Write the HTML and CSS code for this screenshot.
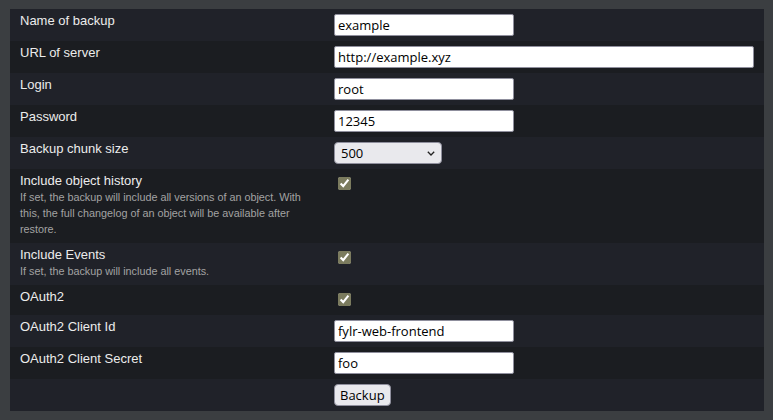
FILE: index.html
```html
<!DOCTYPE html>
<html>
<head>
<meta charset="utf-8">
<link rel="stylesheet" href="styles.css">
</head>
<body>
<div class="wrap">
<table class="form">
  <colgroup><col class="c-label"><col class="c-field"></colgroup>
  <tr>
    <td class="lbl">Name of backup</td>
    <td class="fld"><input class="txt" type="text" value="example"></td>
  </tr>
  <tr>
    <td class="lbl">URL of server</td>
    <td class="fld"><input class="txt wide" type="text" value="http://example.xyz"></td>
  </tr>
  <tr>
    <td class="lbl">Login</td>
    <td class="fld"><input class="txt" type="text" value="root"></td>
  </tr>
  <tr>
    <td class="lbl">Password</td>
    <td class="fld"><input class="txt" type="text" value="12345"></td>
  </tr>
  <tr>
    <td class="lbl">Backup chunk size</td>
    <td class="fld">
      <div class="sel-wrap">
        <select class="sel"><option>500</option></select>
        <svg class="sel-arrow" width="8" height="5" viewBox="0 0 8 5"><path d="M0.8 0.8 L4 4 L7.2 0.8" fill="none" stroke="#222" stroke-width="1.3"/></svg>
      </div>
    </td>
  </tr>
  <tr>
    <td class="lbl">Include object history<div class="desc">If set, the backup will include all versions of an object. With this, the full changelog of an object will be available after restore.</div></td>
    <td class="fld"><input class="chk" type="checkbox" checked></td>
  </tr>
  <tr>
    <td class="lbl">Include Events<div class="desc">If set, the backup will include all events.</div></td>
    <td class="fld"><input class="chk" type="checkbox" checked></td>
  </tr>
  <tr>
    <td class="lbl">OAuth2</td>
    <td class="fld"><input class="chk" type="checkbox" checked></td>
  </tr>
  <tr>
    <td class="lbl">OAuth2 Client Id</td>
    <td class="fld"><input class="txt" type="text" value="fylr-web-frontend"></td>
  </tr>
  <tr>
    <td class="lbl">OAuth2 Client Secret</td>
    <td class="fld"><input class="txt" type="text" value="foo"></td>
  </tr>
  <tr>
    <td class="lbl"></td>
    <td class="fld"><button class="btn" type="button">Backup</button></td>
  </tr>
</table>
</div>
</body>
</html>
```
FILE: styles.css
```css
html, body {
  margin: 0;
  padding: 0;
  background: #3b3e41;
}
.wrap {
  padding: 9px 9px 9px 10px;
}
.form {
  width: 754px;
  border-collapse: collapse;
  table-layout: fixed;
  font-family: "Liberation Sans", Arial, sans-serif;
  font-size: 13px;
  color: #ececec;
}
.c-label { width: 314px; }
.form tr:nth-child(odd) { background: #202229; }
.form tr:nth-child(even) { background: #1b1d21; }
.form td {
  vertical-align: top;
  padding: 5px 10px;
}
.form td.lbl {
  line-height: 16px;
  padding-top: 4px;
  padding-bottom: 6px;
}
.desc {
  font-size: 10.8px;
  line-height: 16px;
  color: #a3a3a3;
}
.txt {
  display: block;
  box-sizing: border-box;
  width: 180px;
  height: 22px;
  margin: 0;
  padding: 1px 3px;
  border: 1px solid #8f8f9d;
  border-radius: 2px;
  background: #fff;
  color: #000;
  font-family: "Open Sans", "Noto Sans", sans-serif;
  font-size: 13px;
}
.txt.wide { width: 420px; }
.sel-wrap {
  position: relative;
  width: 108px;
}
.sel {
  display: block;
  box-sizing: border-box;
  width: 108px;
  height: 22px;
  margin: 0;
  padding: 0 20px 0 6px;
  -webkit-appearance: none;
  appearance: none;
  border: 1px solid #8f8f9d;
  border-radius: 4px;
  background-color: #e9e9ed;
  color: #000;
  font-family: "Open Sans", "Noto Sans", sans-serif;
  font-size: 13px;
}
.sel-arrow {
  position: absolute;
  right: 7px;
  top: 9px;
  pointer-events: none;
}
.chk {
  display: block;
  width: 13px;
  height: 13px;
  margin: 3px 3px 4px 4px;
  accent-color: #7b7b5e;
}
.btn {
  display: block;
  box-sizing: border-box;
  height: 22px;
  margin: 0;
  padding: 0 5px;
  border: 1px solid #8f8f9d;
  border-radius: 4px;
  background: #e9e9ed;
  color: #000;
  font-family: "Open Sans", "Noto Sans", sans-serif;
  font-size: 13px;
}
```
